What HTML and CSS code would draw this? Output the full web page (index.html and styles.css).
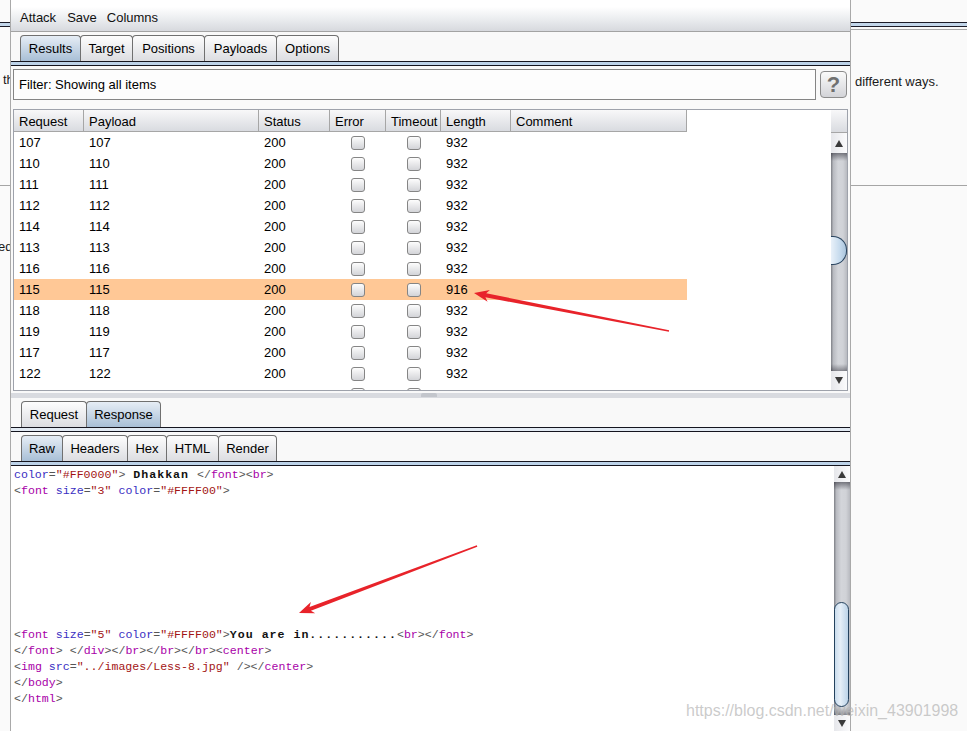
FILE: index.html
```html
<!DOCTYPE html>
<html lang="en">
<head>
<meta charset="utf-8">
<title>Intruder attack</title>
<link rel="stylesheet" href="styles.css">
</head>
<body>
<div class="screen">
  <div class="bg bg-left">
    <div class="dbl"></div>
    <div class="bg-text t-left1">the</div>
    <div class="hr hr-left"></div>
    <div class="bg-text t-left2">ed</div>
  </div>

  <div class="window">
    <div class="menubar"><span>Attack</span><span>Save</span><span>Columns</span></div>

    <div class="tabs main">
      <div class="tab sel w-results">Results</div>
      <div class="tab w-target">Target</div>
      <div class="tab w-positions">Positions</div>
      <div class="tab w-payloads">Payloads</div>
      <div class="tab w-options">Options</div>
    </div>
    <div class="tabline"></div>

    <div class="results">
      <div class="filter-row">
        <div class="filter">Filter: Showing all items</div>
        <div class="help">?</div>
      </div>
      <div class="table">
        <div class="grid">
          <div class="row head">
            <div class="c">Request</div><div class="c">Payload</div><div class="c">Status</div><div class="c">Error</div><div class="c">Timeout</div><div class="c">Length</div><div class="c">Comment</div>
          </div>
          <div class="row"><div class="c">107</div><div class="c">107</div><div class="c">200</div><div class="cb-cell"><span class="cb"></span></div><div class="cb-cell"><span class="cb"></span></div><div class="c">932</div><div class="c"></div></div>
          <div class="row"><div class="c">110</div><div class="c">110</div><div class="c">200</div><div class="cb-cell"><span class="cb"></span></div><div class="cb-cell"><span class="cb"></span></div><div class="c">932</div><div class="c"></div></div>
          <div class="row"><div class="c">111</div><div class="c">111</div><div class="c">200</div><div class="cb-cell"><span class="cb"></span></div><div class="cb-cell"><span class="cb"></span></div><div class="c">932</div><div class="c"></div></div>
          <div class="row"><div class="c">112</div><div class="c">112</div><div class="c">200</div><div class="cb-cell"><span class="cb"></span></div><div class="cb-cell"><span class="cb"></span></div><div class="c">932</div><div class="c"></div></div>
          <div class="row"><div class="c">114</div><div class="c">114</div><div class="c">200</div><div class="cb-cell"><span class="cb"></span></div><div class="cb-cell"><span class="cb"></span></div><div class="c">932</div><div class="c"></div></div>
          <div class="row"><div class="c">113</div><div class="c">113</div><div class="c">200</div><div class="cb-cell"><span class="cb"></span></div><div class="cb-cell"><span class="cb"></span></div><div class="c">932</div><div class="c"></div></div>
          <div class="row"><div class="c">116</div><div class="c">116</div><div class="c">200</div><div class="cb-cell"><span class="cb"></span></div><div class="cb-cell"><span class="cb"></span></div><div class="c">932</div><div class="c"></div></div>
          <div class="row hl"><div class="c">115</div><div class="c">115</div><div class="c">200</div><div class="cb-cell"><span class="cb"></span></div><div class="cb-cell"><span class="cb"></span></div><div class="c">916</div><div class="c"></div></div>
          <div class="row"><div class="c">118</div><div class="c">118</div><div class="c">200</div><div class="cb-cell"><span class="cb"></span></div><div class="cb-cell"><span class="cb"></span></div><div class="c">932</div><div class="c"></div></div>
          <div class="row"><div class="c">119</div><div class="c">119</div><div class="c">200</div><div class="cb-cell"><span class="cb"></span></div><div class="cb-cell"><span class="cb"></span></div><div class="c">932</div><div class="c"></div></div>
          <div class="row"><div class="c">117</div><div class="c">117</div><div class="c">200</div><div class="cb-cell"><span class="cb"></span></div><div class="cb-cell"><span class="cb"></span></div><div class="c">932</div><div class="c"></div></div>
          <div class="row"><div class="c">122</div><div class="c">122</div><div class="c">200</div><div class="cb-cell"><span class="cb"></span></div><div class="cb-cell"><span class="cb"></span></div><div class="c">932</div><div class="c"></div></div>
          <div class="row"><div class="c">120</div><div class="c">120</div><div class="c">200</div><div class="cb-cell"><span class="cb"></span></div><div class="cb-cell"><span class="cb"></span></div><div class="c">932</div><div class="c"></div></div>
        </div>
        <div class="vscroll">
          <div class="vs-corner"></div>
          <div class="arrow up"></div>
          <div class="track"><div class="thumb-half"></div></div>
          <div class="arrow down"></div>
        </div>
      </div>
    </div>

    <div class="splitter"><div class="splitbar"><div class="grip"></div></div></div>

    <div class="tabs req">
      <div class="tab w-request">Request</div>
      <div class="tab sel w-response">Response</div>
    </div>
    <div class="tabline light"></div>

    <div class="tabs raw">
      <div class="tab sel w-raw">Raw</div>
      <div class="tab w-headers">Headers</div>
      <div class="tab w-hex">Hex</div>
      <div class="tab w-html">HTML</div>
      <div class="tab w-render">Render</div>
    </div>
    <div class="tabline"></div>

    <div class="editor">
      <div class="code">
        <div class="ln"><span class="a">color</span><span class="p">=</span><span class="v">"#FF0000"</span><span class="p">&gt;</span><b> Dhakkan </b><span class="p">&lt;/</span><span class="t">font</span><span class="p">&gt;&lt;</span><span class="t">br</span><span class="p">&gt;</span></div>
        <div class="ln"><span class="p">&lt;</span><span class="t">font</span> <span class="a">size</span><span class="p">=</span><span class="v">"3"</span> <span class="a">color</span><span class="p">=</span><span class="v">"#FFFF00"</span><span class="p">&gt;</span></div>
        <div class="ln"></div>
        <div class="ln"></div>
        <div class="ln"></div>
        <div class="ln"></div>
        <div class="ln"></div>
        <div class="ln"></div>
        <div class="ln"></div>
        <div class="ln"></div>
        <div class="ln"><span class="p">&lt;</span><span class="t">font</span> <span class="a">size</span><span class="p">=</span><span class="v">"5"</span> <span class="a">color</span><span class="p">=</span><span class="v">"#FFFF00"</span><span class="p">&gt;</span><b>You are in...........</b><span class="p">&lt;</span><span class="t">br</span><span class="p">&gt;&lt;/</span><span class="t">font</span><span class="p">&gt;</span></div>
        <div class="ln"><span class="p">&lt;/</span><span class="t">font</span><span class="p">&gt;</span> <span class="p">&lt;/</span><span class="t">div</span><span class="p">&gt;&lt;/</span><span class="t">br</span><span class="p">&gt;&lt;/</span><span class="t">br</span><span class="p">&gt;&lt;/</span><span class="t">br</span><span class="p">&gt;&lt;</span><span class="t">center</span><span class="p">&gt;</span></div>
        <div class="ln"><span class="p">&lt;</span><span class="t">img</span> <span class="a">src</span><span class="p">=</span><span class="v">"../images/Less-8.jpg"</span> <span class="p">/&gt;&lt;/</span><span class="t">center</span><span class="p">&gt;</span></div>
        <div class="ln"><span class="p">&lt;/</span><span class="t">body</span><span class="p">&gt;</span></div>
        <div class="ln"><span class="p">&lt;/</span><span class="t">html</span><span class="p">&gt;</span></div>
      </div>
      <div class="vscroll2">
        <div class="arrow2 up"></div>
        <div class="track2"><div class="thumb-pill"></div></div>
        <div class="arrow2 down"></div>
      </div>
    </div>
  </div>

  <div class="bg bg-right">
    <div class="dbl"></div>
    <div class="grayline"></div>
    <div class="bg-text t-right">different ways.</div>
    <div class="hr hr-right"></div>
  </div>

  <svg class="arrows" width="967" height="731" viewBox="0 0 967 731" aria-hidden="true">
    <polygon points="474,293 487.6,301.8 485.4,297.3 668.9,331.7 669.1,330.3 486.2,293.3 489.9,290" fill="#e8232a"/>
    <polygon points="299,613 315.2,613.3 310.9,610.7 477.3,546.7 476.8,545.3 309.5,606.9 310.9,602.1" fill="#e8232a"/>
  </svg>
  <div class="watermark">https://blog.csdn.net/weixin_43901998</div>
</div>
</body>
</html>
```

FILE: styles.css
```css
* { box-sizing: border-box; margin: 0; padding: 0; }
html, body { width: 967px; height: 731px; overflow: hidden; }
body {
  background: #fafafa;
  font-family: "Liberation Sans", Arial, sans-serif;
  font-size: 13px;
  color: #000;
}
.screen { position: relative; display: flex; width: 967px; height: 731px; overflow: hidden; }

/* background page */
.bg { background: #fafafa; overflow: hidden; white-space: nowrap; height: 731px; }
.bg-left { width: 10px; flex: none; }
.bg-right { flex: 1; }
.dbl { margin-top: 22px; height: 5px; border-top: 1px solid #1c1c28; border-bottom: 1px solid #1c1c28; background: #c2d6ea; }
.grayline { margin-top: 2px; height: 1px; background: #a7a7a7; }
.bg-text { line-height: 16px; color: #1a1a1a; }
.t-left1 { margin-top: 45px; padding-left: 3px; }
.hr { height: 1px; background: #a5a5a5; }
.hr-left { margin-top: 97px; }
.t-left2 { margin-top: 53px; text-indent: -2px; }
.t-right { margin-top: 44px; padding-left: 4px; }
.hr-right { margin-top: 95px; }

/* window */
.window {
  width: 841px; flex: none; height: 731px;
  border-left: 1px solid #a9a9a9; border-right: 1px solid #a9a9a9;
  background: #f9f9f9;
  display: flex; flex-direction: column;
}
.menubar {
  height: 32px; flex: none;
  border-bottom: 1px solid #a3a3a3;
  background: linear-gradient(#ffffff 0, #ffffff 22%, #eef0f2 55%, #d7d9de 100%);
  display: flex; align-items: center; gap: 10px;
  padding: 3px 0 0 9px; color: #111;
}
.menubar span:first-child { margin-right: 1px; }

.tabs { display: flex; align-items: flex-end; flex: none; height: 29px; padding: 3px 0 0 9px; }
.tabs.req { height: 26px; padding: 0 0 0 10px; }
.tabs.raw { padding-left: 10px; }
.tab {
  height: 26px; margin-right: -1px;
  border: 1px solid #707070; border-bottom: none; border-radius: 4px 4px 0 0;
  background: linear-gradient(#fdfdfd, #dcdde1);
  display: flex; align-items: center; justify-content: center;
}
.tab.sel { background: linear-gradient(#e6edf5, #a8bfd6); }
.w-results { width: 61px; } .w-target { width: 53px; } .w-positions { width: 73px; }
.w-payloads { width: 73px; } .w-options { width: 63px; }
.w-request { width: 66px; } .w-response { width: 75px; }
.w-raw { width: 42px; } .w-headers { width: 66px; } .w-hex { width: 40px; }
.w-html { width: 53px; } .w-render { width: 59px; }

.tabline { height: 5px; flex: none; border-top: 1px solid #15151f; border-bottom: 1px solid #15151f; background: #bcd2e8; }
.tabline.light { background: #e2eaf3; }

/* results */
.results { flex: none; padding: 3px 2px 0 2px; display: flex; flex-direction: column; gap: 9px; }
.filter-row { display: flex; align-items: center; gap: 4px; height: 31px; }
.filter {
  width: 803px; height: 31px; border: 1px solid #858585; background: #fdfdfd;
  display: flex; align-items: center; padding-left: 5px;
}
.help {
  width: 27px; height: 27px; border: 1px solid #8b8b8b; border-radius: 4px;
  background: linear-gradient(#fafafa, #d3d4d8);
  display: flex; align-items: center; justify-content: center;
  font-size: 22px; font-weight: bold; color: #707070;
}
.table { width: 835px; height: 282px; border: 1px solid #9ea2ab; display: flex; background: #fff; }
.grid { flex: 1; overflow: hidden; }
.row {
  display: grid; grid-template-columns: 70px 175px 71px 56px 55px 70px 176px;
  width: 673px; height: 21px; align-items: center;
}
.row.head { height: 22px; align-items: stretch; }
.head .c {
  border-right: 1px solid #a6a6a6; border-bottom: 1px solid #a6a6a6;
  background: linear-gradient(#f8f8f9, #d9dbe0);
  display: flex; align-items: center; padding-top: 1px;
}
.c { padding-left: 5px; white-space: nowrap; }
.row.hl { background: #ffc896; }
.cb-cell { display: flex; justify-content: center; }
.cb {
  display: block; width: 14px; height: 14px;
  border: 1px solid #858585; border-radius: 3px;
  background: linear-gradient(#fdfdfd, #d3d4d8);
}

/* scrollbars */
.vscroll { width: 16px; flex: none; display: flex; flex-direction: column; }
.vs-corner { height: 23px; background: linear-gradient(#f8f8f9, #d9dbe0); border-bottom: 1px solid #a6a6a6; }
.arrow, .arrow2 {
  background: linear-gradient(to right, #e6e7eb, #fbfbfc);
  display: flex; align-items: center; justify-content: center;
}
.arrow { height: 20px; }
.arrow.down { height: 19px; }
.arrow2 { height: 16px; }
.up::before, .down::before { content: ""; width: 0; height: 0; border-left: 4px solid transparent; border-right: 4px solid transparent; }
.up::before { border-bottom: 7px solid #3a3a3a; }
.down::before { border-top: 7px solid #3a3a3a; }
.track, .track2 {
  flex: 1;
  background:
    linear-gradient(rgba(40,40,50,0.55), rgba(40,40,50,0) 8px),
    linear-gradient(to top, rgba(40,40,50,0.45), rgba(40,40,50,0) 7px),
    linear-gradient(to right, #7e8086 0, #b9bbc1 15%, #d3d5da 45%, #d0d2d7 75%, #b8bac0 100%);
}
.thumb-half {
  margin-top: 83px; height: 29px; width: 16px;
  border: 1px solid #2a4560; border-left: none; border-radius: 0 14px 14px 0;
  background: linear-gradient(to right, #e9f1f9, #c5daed 60%, #aac4dc);
}
.splitter { height: 10px; flex: none; padding-top: 2px; }
.splitbar { height: 5px; background: #d9dbe0; display: flex; }
.grip { margin-left: 410px; width: 16px; height: 4px; background: #c3c6cc; border-radius: 2px 2px 0 0; }

/* editor */
.editor { flex: 1; min-height: 0; display: flex; background: #fff; }
.code {
  flex: 1; overflow: hidden; padding: 1px 0 0 3px;
  font-family: "Liberation Mono", "DejaVu Sans Mono", monospace;
  font-size: 11.6px; line-height: 16px; color: #000;
}
.ln { height: 16px; white-space: pre; }
.code b { letter-spacing: 1px; font-weight: bold; color: #111; }
.p { color: #555; }
.t { color: #a800a8; }
.a { color: #3a2ec2; }
.v { color: #a31515; }
.vscroll2 { width: 16px; flex: none; display: flex; flex-direction: column; background: #f4f4f6; }
.thumb-pill {
  margin-top: 120px; height: 105px; width: 15px;
  border: 1px solid #24425e; border-radius: 8px;
  background: linear-gradient(to right, #c9dced, #e6eff8 40%, #bcd3e8);
}

/* overlays */
.arrows { position: absolute; left: 0; top: 0; pointer-events: none; }
.watermark {
  position: absolute; left: 686px; top: 702px;
  font-size: 16px; line-height: 18px; white-space: nowrap;
  color: rgba(180, 180, 180, 0.7);
  pointer-events: none;
}
```
